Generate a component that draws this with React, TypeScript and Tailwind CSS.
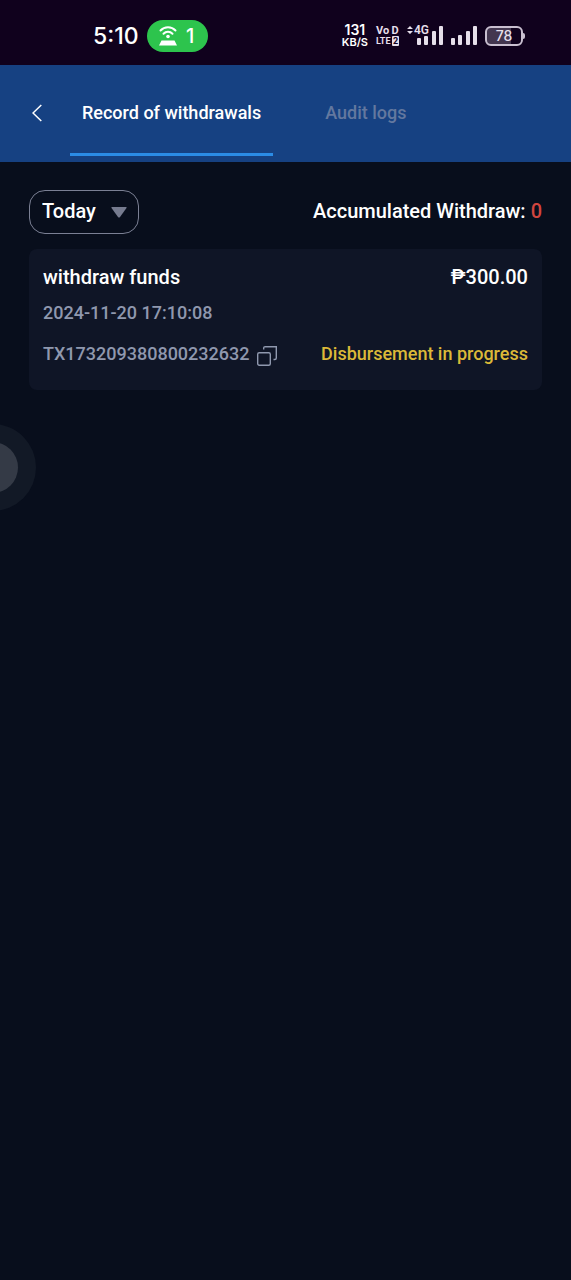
// App.tsx
import { useState } from 'react';

interface Withdrawal {
  id: string;
  title: string;
  amount: string;
  date: string;
  status: string;
}

const withdrawals: Withdrawal[] = [
  {
    id: 'TX173209380800232632',
    title: 'withdraw funds',
    amount: '₱300.00',
    date: '2024-11-20 17:10:08',
    status: 'Disbursement in progress',
  },
];

const tabs = ['Record of withdrawals', 'Audit logs'];

function SignalBars() {
  return (
    <svg className="h-5 w-[26px]" viewBox="0 0 26 20" fill="#e6dfea" aria-hidden="true">
      <rect x="0" y="12" width="4" height="7" rx="1" />
      <rect x="7" y="9" width="4" height="10" rx="1" />
      <rect x="15" y="5" width="4" height="14" rx="1" />
      <rect x="22" y="0" width="4" height="19" rx="1" />
    </svg>
  );
}

function NetworkSignal() {
  return (
    <div className="relative flex w-9 items-end justify-end">
      <svg className="h-5 w-[26px]" viewBox="0 0 26 20" fill="#e6dfea" aria-hidden="true">
        <rect x="0" y="12" width="4" height="7" rx="1" />
        <rect x="7" y="10" width="4" height="9" rx="1" />
        <rect x="15" y="5" width="4" height="14" rx="1" />
        <rect x="22" y="0" width="4" height="19" rx="1" />
      </svg>
      <svg className="absolute top-0 left-0 h-2 w-1.5" viewBox="0 0 6 8" fill="#e6dfea" aria-hidden="true">
        <path d="M3 0L6 3H0ZM3 8L0 5H6Z" />
      </svg>
      <span className="absolute -top-0.5 left-[7px] font-['Roboto',sans-serif] text-[12px] leading-3 font-semibold">4G</span>
    </div>
  );
}

function StatusBar() {
  return (
    <div className="flex h-[65px] items-center justify-between bg-[#10011d] pt-1.5 pr-[46px] pl-[93px] font-['Inter',sans-serif] text-[#e6dfea]">
      <div className="flex items-center gap-2">
        <span className="text-[23px] leading-8 font-medium text-white">5:10</span>
        <div className="flex h-8 items-center gap-1.5 rounded-full bg-[#2dc44d] pr-2.5 pl-3 text-white">
          <svg className="h-5 w-[18px]" viewBox="0 0 18 20" fill="none" stroke="#fff" strokeWidth="2" strokeLinecap="round" aria-hidden="true">
            <path d="M1.500 4.500C5.500 .2 12.500 .2 16.500 4.500" />
            <path d="M4.500 7.800C7 5.200 11 5.200 13.500 7.800" />
            <circle cx="9" cy="10.500" r="1.800" fill="#fff" stroke="none" />
            <path d="M2.500 14.500H15.500L18 19.500H0Z" fill="#fff" stroke="none" />
          </svg>
          <span className="w-[15px] text-center text-[20px] leading-8">1</span>
        </div>
      </div>

      <div className="flex items-center gap-2">
        <div className="text-center font-semibold text-white">
          <div className="text-[14px] leading-3">131</div>
          <div className="text-[11px] leading-3">KB/S</div>
        </div>
        <div className="flex w-[23px] flex-col font-['Roboto',sans-serif] leading-[10px] font-bold">
          <div className="flex justify-between text-[11px]">
            <span>Vo</span>
            <span className="w-2 text-center">D</span>
          </div>
          <div className="flex justify-between text-[9px]">
            <span>LTE</span>
            <span className="w-[7px] rounded-[1px] bg-[#e6dfea] text-center text-[#10011d]">2</span>
          </div>
        </div>
        <NetworkSignal />
        <SignalBars />
        <div className="flex items-center">
          <div className="flex h-5 w-[38px] items-center justify-center rounded-md border-2 border-[#c9bfd0] bg-linear-to-r from-[#43364f] from-70% to-[#10011d] to-70% text-[14px] leading-4 font-medium">
            78
          </div>
          <div className="h-1.5 w-0.5 rounded-r-sm bg-[#c9bfd0]" />
        </div>
      </div>
    </div>
  );
}

function CopyIcon() {
  return (
    <svg className="h-5 w-5" viewBox="0 0 20 20" fill="none" stroke="currentColor" strokeWidth="1.4" aria-hidden="true">
      <rect x=".7" y="6.700" width="12.600" height="12.600" rx="1.500" />
      <path d="M6.700 3.500V2.200C6.700 1.300 7.300 .7 8.200 .7H19.300V12C19.300 12.900 18.700 13.500 17.800 13.500H16.500" />
    </svg>
  );
}

export default function App() {
  const [activeTab, setActiveTab] = useState(tabs[0]);
  const [period, setPeriod] = useState('Today');

  return (
    <div className="min-h-screen overflow-x-hidden bg-[#080e1c] font-['Roboto',sans-serif] font-medium text-white">
      <StatusBar />

      {/* Header tabs */}
      <header className="flex h-[97px] items-center bg-[#164182] pl-6">
        <button type="button" aria-label="Back" className="flex h-12 w-[26px] items-center justify-center pb-0.5">
          <svg className="h-[18px] w-2.5" viewBox="0 0 10 18" fill="none" stroke="#fff" strokeWidth="1.5" aria-hidden="true">
            <path d="M9.300 1L1 9L9.300 17" />
          </svg>
        </button>
        <nav className="ml-5 flex h-full gap-10">
          {tabs.map((tab) => (
            <button
              key={tab}
              type="button"
              onClick={() => setActiveTab(tab)}
              className={`mt-1 mb-1.5 border-b-[3px] px-3 pt-1 text-[18px] leading-6 ${
                activeTab === tab ? 'border-[#2b8ce6] text-white' : 'border-transparent text-[#63789f]'
              }`}
            >
              {tab}
            </button>
          ))}
        </nav>
      </header>

      <main className="px-[29px] pt-7">
        {/* Filter and total */}
        <div className="flex items-center justify-between">
          <div className="relative">
            <select
              aria-label="Period"
              value={period}
              onChange={(e) => setPeriod(e.target.value)}
              className="h-11 w-[110px] appearance-none rounded-2xl border border-[#7b8094] bg-transparent pb-0.5 pl-3 text-[20px] text-white"
            >
              <option>Today</option>
              <option>Yesterday</option>
            </select>
            <svg className="pointer-events-none absolute top-[17px] right-3 h-[11px] w-4" viewBox="0 0 16 11" fill="#767b8f" aria-hidden="true">
              <path d="M1 0H15Q16 0 15.500 1L9 10Q8 11 7 10L.5 1Q0 0 1 0Z" />
            </svg>
          </div>
          <p className="pb-0.5 text-[20px] leading-7">
            Accumulated Withdraw: <span className="text-[#d2453f]">0</span>
          </p>
        </div>

        {/* Withdrawal list */}
        <ul className="mt-[15px]">
          {withdrawals.map((item) => (
            <li key={item.id} className="rounded-lg bg-[#0f1526] px-3.5 pt-3.5 pb-6 text-[18px] leading-6">
              <div className="flex justify-between text-[20px] leading-7">
                <h2>{item.title}</h2>
                <span>{item.amount}</span>
              </div>
              <p className="mt-2.5 text-[#8f98ae]">{item.date}</p>
              <div className="mt-[17px] flex justify-between">
                <div className="flex items-center gap-2 text-[#8f98ae]">
                  <span>{item.id}</span>
                  <button type="button" aria-label="Copy transaction number" className="mt-1">
                    <CopyIcon />
                  </button>
                </div>
                <span className="text-[#dcb938]">{item.status}</span>
              </div>
            </li>
          ))}
        </ul>
      </main>

      {/* Floating assist handle */}
      <button
        type="button"
        aria-label="Open assist menu"
        className="fixed top-[424px] -left-[51px] flex size-[87px] items-center justify-center rounded-full bg-[#121926]"
      >
        <span className="size-[51px] rounded-full bg-[#343a46]" />
      </button>
    </div>
  );
}
